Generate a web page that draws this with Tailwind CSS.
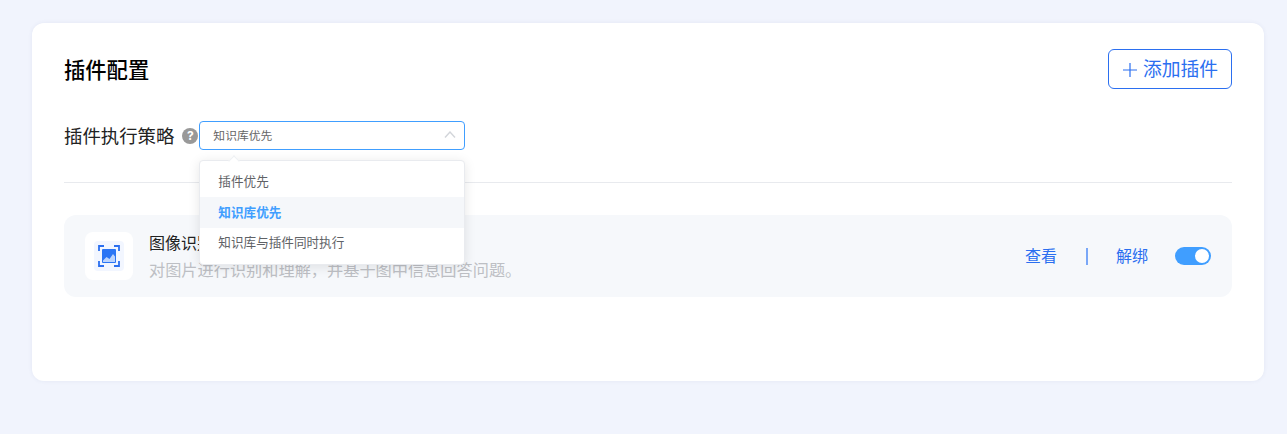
<!DOCTYPE html>
<html lang="zh">
<head>
<meta charset="utf-8">
<script src="https://cdn.jsdelivr.net/npm/@tailwindcss/browser@4"></script>
</head>
<body class="m-0 h-[434px] w-[1287px] overflow-hidden bg-[#f1f4fd] font-['Inter','Noto_Sans_CJK_SC',sans-serif]">
<div class="pl-8 pr-[23px] pt-[23px]">
  <div class="h-[358px] rounded-xl bg-white px-8 pt-[26px] shadow-[0_0_4px_rgba(60,80,140,0.08)]">
    <div class="flex h-10 items-center justify-between">
      <h1 class="pt-[3px] text-[21.3px] font-medium leading-none text-black">插件配置</h1>
      <button class="flex h-10 w-[124px] items-center justify-center gap-1.5 rounded-md border border-[#2b6ff0] bg-white pl-[1px] pt-[2px] text-[18.8px] text-[#2b6ff0]">
        <svg width="14" height="14" viewBox="0 0 14 14" fill="none" stroke="#2b6ff0" stroke-width="1.2"><path d="M7 0v14M0 7h14"/></svg>
        <span>添加插件</span>
      </button>
    </div>
    <div class="mt-8 flex h-[29px] items-center">
      <span class="pt-0.5 text-[18.4px] leading-none text-[#222]">插件执行策略</span>
      <span class="ml-2 flex h-4 w-4 items-center justify-center rounded-full bg-[#999] text-[12px] font-bold leading-none text-white">?</span>
      <div class="relative ml-[1px] h-[29px] w-[266px]">
        <div class="flex h-full items-center justify-between rounded border border-[#409eff] pl-[13px] pr-[8px] pt-0.5 text-[11.8px] text-[#666]">
          <span>知识库优先</span>
          <svg class="mb-1" width="12" height="7" viewBox="0 0 12 7" fill="none" stroke="#d2d5da" stroke-width="1.4"><path d="M1 6.5 6 1l5 5.5"/></svg>
        </div>
        <div class="absolute left-[31px] top-[36px] z-20 h-2 w-2 rotate-45 border-l border-t border-[#eef0f3] bg-white"></div>
        <div class="absolute left-0 top-[39px] z-10 h-[105px] w-[266px] rounded border border-[#e9ebef] bg-white pt-[6px] text-[12.6px] text-[#606266] shadow-[0_2px_12px_rgba(0,0,0,0.1)]">
          <div class="flex h-[30px] items-center px-[18px]">插件优先</div>
          <div class="flex h-[31px] items-center bg-[#f5f7fa] px-[18px] pt-[1px] font-bold text-[#409eff]">知识库优先</div>
          <div class="flex h-[30px] items-center px-[18px]">知识库与插件同时执行</div>
        </div>
      </div>
    </div>
    <div class="mt-8 h-px bg-[#e8eaee]"></div>
    <div class="mt-8 flex h-[82px] items-center rounded-xl bg-[#f6f8fb] pl-[21px] pr-[21px]">
      <div class="flex h-12 w-12 items-center justify-center rounded-lg bg-white">
        <div class="flex h-[30px] w-[30px] items-center justify-center rounded bg-[#f2f6ff]">
          <svg width="22" height="22" viewBox="0 0 22 22" fill="none">
            <path d="M1 6V1h5M16 1h5v5M21 16v5h-5M6 21H1v-5" stroke="#2b6ff0" stroke-width="1.8"/>
            <rect x="4" y="4" width="14" height="14" rx="1" fill="#2a75f5"/>
            <path d="M5 15.5l3.5-3.5 3 2 3.5-5 2 2.5V17H5z" fill="#bcd4fd"/>
          </svg>
        </div>
      </div>
      <div class="ml-4 flex flex-col gap-[3px]">
        <span class="text-[16px] leading-6 text-[#222]">图像识别</span>
        <span class="text-[16.2px] leading-6 text-[#bdbfc4]">对图片进行识别和理解，并基于图中信息回答问题。</span>
      </div>
      <div class="ml-auto flex items-center text-[16px] text-[#2b6ff0]">
        <span>查看</span>
        <span class="ml-[29px] mr-[28px] h-[17px] w-[2px] bg-[#7aa7f7]"></span>
        <span>解绑</span>
        <span class="ml-[27px] flex h-[18px] w-9 items-center justify-end rounded-full bg-[#409eff] pr-0.5">
          <span class="h-[14px] w-[14px] rounded-full bg-white"></span>
        </span>
      </div>
    </div>
  </div>
</div>
</body>
</html>
